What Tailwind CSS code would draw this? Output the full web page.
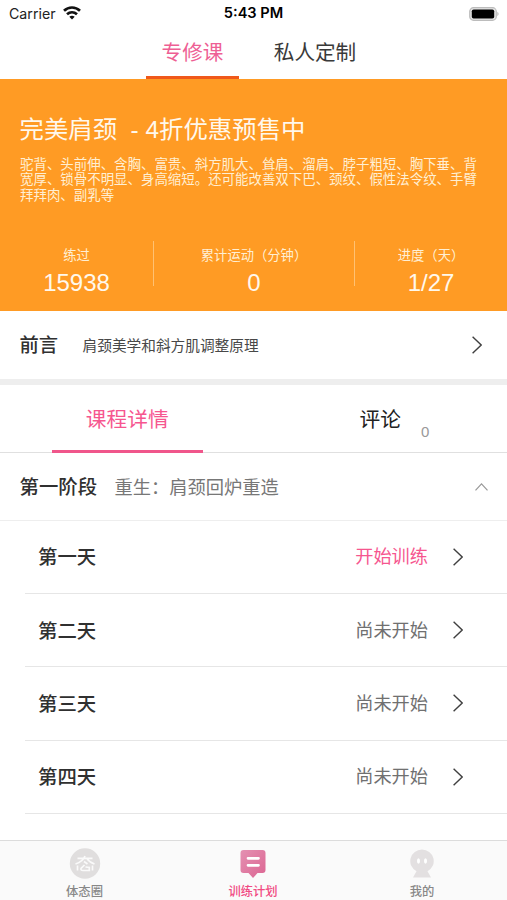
<!DOCTYPE html>
<html lang="zh-CN">
<head>
<meta charset="utf-8">
<meta name="viewport" content="width=device-width, initial-scale=1">
<title>专修课</title>
<script src="https://cdn.jsdelivr.net/npm/@tailwindcss/browser@4"></script>
</head>
<body class="bg-white">
<div class="flex h-[900px] w-[507px] flex-col overflow-hidden bg-white font-['Liberation_Sans','Noto_Sans_CJK_SC',sans-serif] whitespace-nowrap text-[#303030]">

  <header class="grid h-[27px] shrink-0 grid-cols-3 items-center pr-[8px] pl-[9px] text-black">
    <div class="flex items-center gap-[7px] font-['Inter','Liberation_Sans',sans-serif] text-[14.200px] text-[#222]">
      <span>Carrier</span>
      <svg class="h-[14px] w-[18px]" viewBox="0 0 18 14" fill="none" stroke="#111" stroke-width="2.700">
        <path d="M1 4.800C5.600.400 12.400.400 17 4.800"/><path d="M4 8.300C7 5.600 11 5.600 14 8.300"/><path d="M6.300 10.700C8 9.300 10 9.300 11.700 10.700L9 13.600Z" fill="#111" stroke="none"/>
      </svg>
    </div>
    <div class="pr-px text-center font-['Inter','Liberation_Sans',sans-serif] text-[14.600px] font-semibold">5:43 PM</div>
    <div class="flex justify-end">
      <svg class="h-[14px] w-[30px]" viewBox="0 0 30 14"><rect x=".7" y=".7" width="26.600" height="12.600" rx="3.800" fill="#e4e4e4" stroke="#bcbcbc" stroke-width="1.200"/><rect x="2.800" y="2.400" width="22.400" height="9.200" rx="1.800"/><path d="M28.300 4.800Q31 7 28.300 9.200Z" fill="#bbb"/></svg>
    </div>
  </header>

  <nav class="flex h-[52px] shrink-0 pl-[146px] text-[20.600px]">
    <div class="flex w-[93px] justify-center border-b-[3px] border-[#f0591a] pt-[11px] leading-[30px] text-[#ee5f94]">专修课</div>
    <div class="w-[152px] pt-[11px] text-center leading-[30px] text-[#3a3a3a]">私人定制</div>
  </nav>

  <section class="h-[232px] shrink-0 bg-[#ff9b24] text-[#fff8ec]">
    <h1 class="pt-[35px] pl-[19.500px] text-[24.400px] leading-[32px] font-normal whitespace-pre">完美肩颈  - 4折优惠预售中</h1>
    <p class="mt-[11px] pl-[20px] text-[13.450px] leading-[15.400px] text-[#ffefd3]">驼背、头前伸、含胸、富贵、斜方肌大、耸肩、溜肩、脖子粗短、胸下垂、背<br>宽厚、锁骨不明显、身高缩短。还可能改善双下巴、颈纹、假性法令纹、手臂<br>拜拜肉、副乳等</p>
    <div class="mt-[38px] grid h-[45px] grid-cols-[153px_202px_152px] grid-rows-[45px] text-center">
      <div class="pt-[5px]"><div class="text-[13.300px] leading-[20px] text-[#ffefd3]">练过</div><div class="pt-[3px] text-[24px] leading-[28px]">15938</div></div>
      <div class="border-x border-[#ffc172] pt-[5px]"><div class="text-[13.300px] leading-[20px] text-[#ffefd3]">累计运动（分钟）</div><div class="pt-[3px] text-[24px] leading-[28px]">0</div></div>
      <div class="pt-[5px]"><div class="text-[13.300px] leading-[20px] text-[#ffefd3]">进度（天）</div><div class="pt-[3px] text-[24px] leading-[28px]">1/27</div></div>
    </div>
  </section>

  <section class="flex h-[74px] shrink-0 items-center border-b-[6px] border-[#eee] pr-[25px] pl-[19.500px]">
    <h2 class="pt-[2px] text-[19.300px] font-medium">前言</h2>
    <span class="ml-[24.500px] pt-[2px] text-[14.680px] text-[#484848]">肩颈美学和斜方肌调整原理</span>
    <svg class="ml-auto h-[18px] w-[10px]" viewBox="0 0 10 18" fill="none" stroke="#404040" stroke-width="1.400"><path d="M.600.700L9.200 9L.600 17.300"/></svg>
  </section>

  <nav class="grid h-[68px] shrink-0 grid-cols-2 border-b border-[#e0e0e0] text-[20.700px]">
    <div class="flex justify-center">
      <div class="-mb-px ml-px flex w-[151px] justify-center border-b-[3px] border-[#f0568b] pt-[20px] leading-[30px] text-[#f6568f]">课程详情</div>
    </div>
    <div class="flex pt-[20px] pl-[106px] leading-[30px] text-[#222]">评论<span class="ml-[20px] pt-[12px] text-[15px] text-[#999]">0</span></div>
  </nav>

  <section class="flex h-[67px] shrink-0 items-center pr-[19px] pl-[19.500px]">
    <h2 class="pt-[2px] text-[19.400px] font-medium">第一阶段</h2>
    <span class="ml-[17.500px] pt-[2px] text-[18.250px] text-[#777]">重生：肩颈回炉重造</span>
    <svg class="ml-auto h-[8px] w-[13px]" viewBox="0 0 13 8" fill="none" stroke="#999" stroke-width="1.200"><path d="M.500 7.400L6.500.900L12.500 7.400"/></svg>
  </section>

  <main class="flex-1 border-t border-[#eee]">
    <div class="ml-[25px] flex h-[73.200px] items-center border-b border-[#e6e6e6] pr-[44px] pl-[13px]">
      <h3 class="pt-px text-[19.400px] font-medium">第一天</h3><span class="ml-auto pt-[2px] text-[18.200px] text-[#f6568f]">开始训练</span>
      <svg class="ml-[25px] h-[18px] w-[10px]" viewBox="0 0 10 18" fill="none" stroke="#404040" stroke-width="1.400"><path d="M.600.700L9.200 9L.600 17.300"/></svg>
    </div>
    <div class="ml-[25px] flex h-[73.200px] items-center border-b border-[#e6e6e6] pr-[44px] pl-[13px]">
      <h3 class="pt-[2px] text-[19.400px] font-medium">第二天</h3><span class="ml-auto pt-[2px] text-[18.200px] text-[#707070]">尚未开始</span>
      <svg class="ml-[25px] h-[18px] w-[10px]" viewBox="0 0 10 18" fill="none" stroke="#404040" stroke-width="1.400"><path d="M.600.700L9.200 9L.600 17.300"/></svg>
    </div>
    <div class="ml-[25px] flex h-[73.200px] items-center border-b border-[#e6e6e6] pr-[44px] pl-[13px]">
      <h3 class="pt-[2px] text-[19.400px] font-medium">第三天</h3><span class="ml-auto pt-[2px] text-[18.200px] text-[#707070]">尚未开始</span>
      <svg class="ml-[25px] h-[18px] w-[10px]" viewBox="0 0 10 18" fill="none" stroke="#404040" stroke-width="1.400"><path d="M.600.700L9.200 9L.600 17.300"/></svg>
    </div>
    <div class="ml-[25px] flex h-[73.200px] items-center border-b border-[#e6e6e6] pr-[44px] pl-[13px]">
      <h3 class="pt-[2px] text-[19.400px] font-medium">第四天</h3><span class="ml-auto pt-[2px] text-[18.200px] text-[#707070]">尚未开始</span>
      <svg class="ml-[25px] h-[18px] w-[10px]" viewBox="0 0 10 18" fill="none" stroke="#404040" stroke-width="1.400"><path d="M.600.700L9.200 9L.600 17.300"/></svg>
    </div>
  </main>

  <footer class="grid h-[60px] shrink-0 grid-cols-3 border-t border-[#dcdcdc] bg-[#fafafa] text-[12.300px] font-medium text-[#888]">
    <div class="flex flex-col items-center pt-[7px]">
      <svg class="h-[31px] w-[32px]" viewBox="0 0 32 31" fill="none" stroke="#fafafa" stroke-width="1.700"><circle cx="16" cy="15.500" r="15.200" fill="#e0dede" stroke="none"/><path d="M8.500 10.300H23.500M16 8C14.500 12 11.500 14.500 6.500 16M18 10.500C19.500 13 21.500 14.500 25.500 16M15 13.500L18.500 16M8.500 17.500V22.500M15.500 17L12 20.500Q11.500 22.500 14 22.500H20.300V19.500L16.500 19M23.500 17.500V22.500"/></svg>
      <span class="mt-[4px] leading-[18px]">体态圈</span>
    </div>
    <div class="flex flex-col items-center pt-[8px] pr-px text-[#f14b83]">
      <svg class="h-[31px] w-[26px]" viewBox="0 0 26 31"><defs><linearGradient id="note" x2="1" y2="1"><stop stop-color="#e491b2"/><stop offset="1" stop-color="#dc6592"/></linearGradient></defs><path d="M3.500 1H22.500Q25.500 1 25.500 4V21Q25.500 24 22.500 24H17.500L13 29L8.500 24H3.500Q.500 24 .500 21V4Q.500 1 3.500 1Z" fill="url(#note)"/><path d="M8 9.300H18.500M8 16.300H18.500" stroke="#fff" stroke-width="2.700" stroke-linecap="round"/></svg>
      <span class="mt-[3px] leading-[18px]">训练计划</span>
    </div>
    <div class="flex flex-col items-center pt-[8px] pr-px">
      <svg class="h-[31px] w-[26px]" viewBox="0 0 26 31"><path d="M13 .500A11.900 11.600 0 0 1 18.500 22.300L22 28.500H4L7.500 22.300A11.900 11.600 0 0 1 13 .500Z" fill="#e3e0e1"/><ellipse cx="9.500" cy="12" rx="1.500" ry="2.700" fill="#fff"/><ellipse cx="16.500" cy="12" rx="1.500" ry="2.700" fill="#fff"/></svg>
      <span class="mt-[3px] leading-[18px]">我的</span>
    </div>
  </footer>
</div>
</body>
</html>
